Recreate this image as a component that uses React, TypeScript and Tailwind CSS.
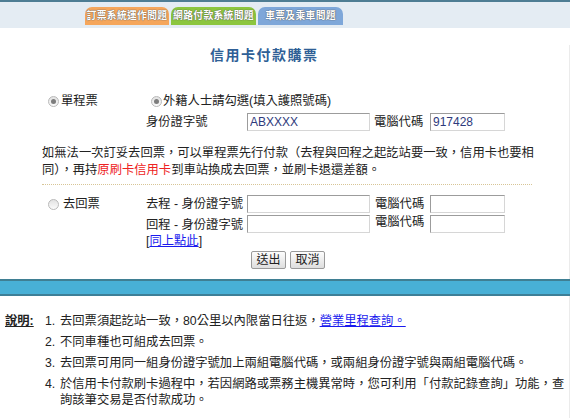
import React from "react";

const Radio = ({ checked }: { checked?: boolean }) => (
  <span className="inline-flex h-[11px] w-[11px] shrink-0 items-center justify-center rounded-full border border-[#b9b9b9] bg-gradient-to-b from-[#e2e2e2] to-[#fbfbfb]">
    {checked && <span className="h-[5px] w-[5px] rounded-full bg-[#7d7d7d]" />}
  </span>
);

const Field = ({ value = "", wide }: { value?: string; wide?: boolean }) => (
  <input
    readOnly
    value={value}
    className={`h-[18px] ${wide ? "w-[123px]" : "w-[75px]"} border border-[#d6d6d6] border-t-[#9c9c9c] border-l-[#9c9c9c] bg-white px-[2px] text-[12px] leading-[16px] text-[#2e3a7c] outline-none`}
  />
);

const Btn = ({ label }: { label: string }) => (
  <button className="h-[18px] w-[35px] rounded-[2px] border border-[#9a9a9a] bg-gradient-to-b from-[#fdfdfd] to-[#dedede] text-[12px] leading-[14px] text-[#222]">
    {label}
  </button>
);

const tabs = [
  { label: "訂票系統運作問題", cls: "w-[84px] bg-[#f5a65b]" },
  { label: "網路付款系統問題", cls: "w-[85px] bg-[#8cc63f]" },
  { label: "車票及乘車問題", cls: "w-[85px] bg-[#7ea7d9]" },
];

export default function App() {
  return (
    <div className="w-[570px] bg-white font-['Liberation_Sans','Noto_Sans_CJK_TC',sans-serif] text-[12.3px] text-[#222]">
      <div className="h-[2px] bg-[#4e7d93]" />
      <div className="flex h-[26px] gap-[2px] bg-[#e4ecf3] pl-[85px] pt-[5px]">
        {tabs.map((t) => (
          <div
            key={t.label}
            className={`${t.cls} flex h-[18px] items-center justify-center rounded-t-[7px] text-[9.8px] font-bold tracking-[0.3px] text-white [text-shadow:0_0_1px_#555,0_0_1px_#555]`}
          >
            {t.label}
          </div>
        ))}
      </div>

      <div className="border-r border-[#ebebeb] pb-[10px]">
        <h1 className="mt-[17px] h-[20px] pl-[210px] text-[14px] font-bold leading-[20px] tracking-[1.5px] text-[#2f5f96]">
          信用卡付款購票
        </h1>

        <div className="mt-[27px] flex h-[18px] items-center pl-[48px] leading-[18px]">
          <div className="flex w-[103px] items-center gap-[2px]">
            <Radio checked />
            <span>單程票</span>
          </div>
          <div className="flex items-center gap-[1px]">
            <Radio checked />
            <span>外籍人士請勾選(填入護照號碼)</span>
          </div>
        </div>

        <div className="mt-[3px] flex h-[18px] items-center pl-[146px]">
          <span className="w-[101px]">身份證字號</span>
          <Field wide value="ABXXXX" />
          <span className="ml-[4px] w-[56px]">電腦代碼</span>
          <Field value="917428" />
        </div>

        <div className="mt-[14px] pl-[42px] leading-[17px]">
          <div className="whitespace-nowrap">如無法一次訂妥去回票，可以單程票先行付款（去程與回程之起訖站要一致，信用卡也要相</div>
          <div className="flex whitespace-nowrap">
            <span>同），再持</span>
            <span className="text-[#ee2222]">原刷卡信用卡</span>
            <span>到車站換成去回票，並刷卡退還差額。</span>
          </div>
        </div>

        <div className="ml-[42px] mt-[5px] w-[490px] border-t border-dotted border-[#d7c596]" />

        <div className="mt-[10px] flex pl-[48px]">
          <div className="flex h-[18px] w-[98px] items-center gap-[4px]">
            <Radio />
            <span>去回票</span>
          </div>
          <div className="flex flex-col">
            <div className="flex h-[18px] items-center">
              <span className="w-[101px]">去程 - 身份證字號</span>
              <Field wide />
              <span className="ml-[5px] w-[55px]">電腦代碼</span>
              <Field />
            </div>
            <div className="mt-[2px] flex h-[18px] items-start">
              <span className="w-[101px] pt-[1px] leading-[18px]">回程 - 身份證字號</span>
              <Field wide />
              <span className="ml-[5px] w-[55px] leading-[14px]">電腦代碼</span>
              <Field />
            </div>
            <div className="mt-[1px] flex h-[14px] leading-[14px]">
              <span>[</span>
              <a className="text-[#1a1aee] underline">同上點此</a>
              <span>]</span>
            </div>
            <div className="mt-[3px] flex gap-[4px] pl-[105px]">
              <Btn label="送出" />
              <Btn label="取消" />
            </div>
          </div>
        </div>
      </div>

      <div className="h-[17px] border-y-2 border-t-[#3f7f93] border-b-[#3d7f97] bg-[#48b0d6]" />

      <div className="flex border-r border-[#ebebeb] pb-[10px] pl-[5px] pt-[15px] text-[12.3px] leading-[16px]">
        <span className="mt-[2px] w-[40px] font-bold underline">說明:</span>
        <ol className="flex flex-col gap-[5px] pt-[2px]">
          <li className="flex">
            <span className="w-[15px]">1.</span>
            <span>去回票須起訖站一致，80公里以內限當日往返，</span>
            <a className="text-[#1a1aee] underline">營業里程查詢。</a>
          </li>
          <li className="flex">
            <span className="w-[15px]">2.</span>
            <span>不同車種也可組成去回票。</span>
          </li>
          <li className="flex">
            <span className="w-[15px]">3.</span>
            <span>去回票可用同一組身份證字號加上兩組電腦代碼，或兩組身份證字號與兩組電腦代碼。</span>
          </li>
          <li className="flex">
            <span className="w-[15px]">4.</span>
            <div className="flex flex-col whitespace-nowrap">
              <span>於信用卡付款刷卡過程中，若因網路或票務主機異常時，您可利用「付款記錄查詢」功能，查</span>
              <span>詢該筆交易是否付款成功。</span>
            </div>
          </li>
        </ol>
      </div>
    </div>
  );
}
